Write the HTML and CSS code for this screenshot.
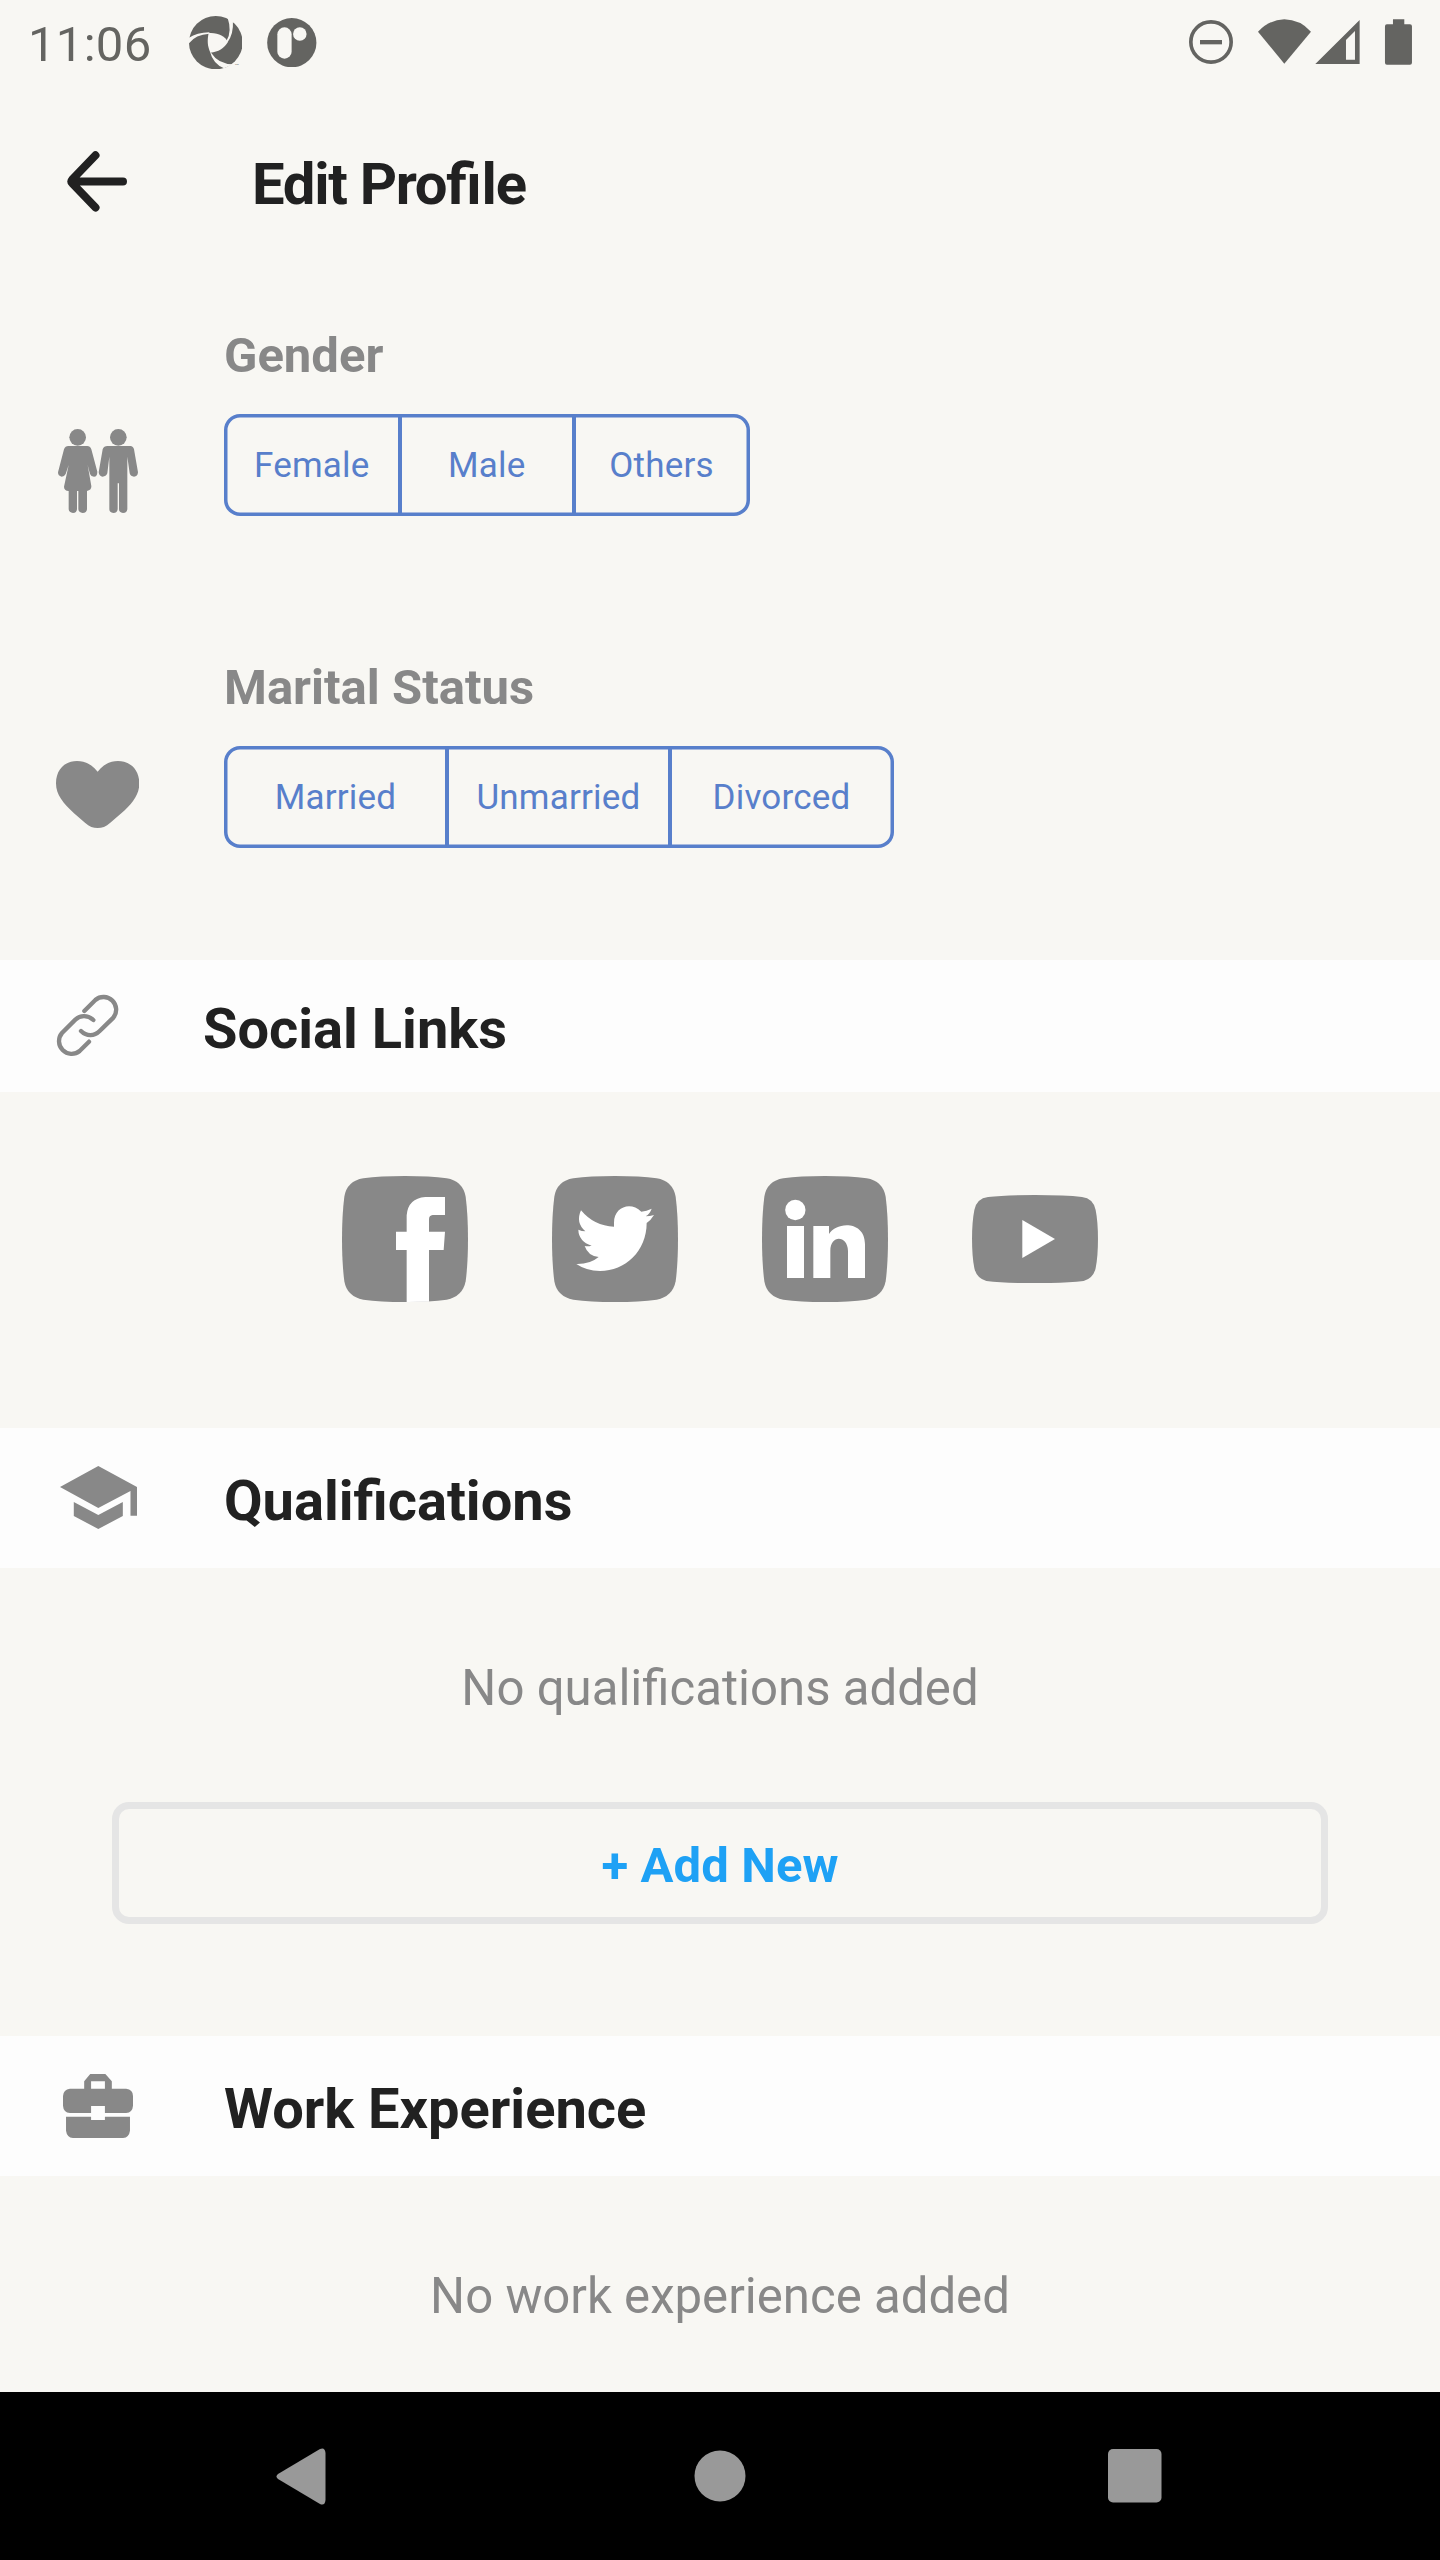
FILE: index.html
```html
<!DOCTYPE html>
<html lang="en">
<head>
<meta charset="utf-8">
<title>Edit Profile</title>
<link rel="stylesheet" href="styles.css">
</head>
<body>
<div class="screen">
  <div class="statusbar">
    <span class="clock">11:06</span>
    <svg class="icon-aperture" viewBox="528 47 150 160" preserveAspectRatio="none">
      <ellipse cx="603" cy="127" rx="75" ry="80" fill="#646461"/>
      <g fill="#f8f7f3">
        <path d="M583 98C610 96 628 107 637 125C626 144 610 155 588 157C579 138 579 118 583 98Z"/>
        <path d="M526 114Q548 97 585 96V100Q545 103 527 130Z"/>
        <path d="M636 126L633 121Q649 93 636 52L651 62Q653 100 636 126Z"/>
        <path d="M587 155L591 159Q610 192 652 192L626 204Q595 190 587 155Z"/>
      </g>
      <text x="657" y="194" font-size="7" fill="#646461">TM</text>
    </svg>
    <svg class="icon-app" viewBox="749 53 139 148" preserveAspectRatio="none">
      <ellipse cx="818.5" cy="127" rx="69" ry="74" fill="#646461"/>
      <rect x="778" y="81" width="40" height="94" rx="20" ry="21" fill="#f8f7f3"/>
      <ellipse cx="841" cy="101" rx="19" ry="20" fill="#f8f7f3"/>
    </svg>
    <svg class="icon-system" viewBox="147 56 670 140" fill="#646461">
      <circle cx="213" cy="125" r="60.5" fill="none" stroke="#646461" stroke-width="11"/>
      <path d="M180 119h66v13h-66z"/>
      <path d="M354 94Q388 58 433 57Q480 58 513 94L433 190Z"/>
      <path fill-rule="evenodd" d="M526 191L659 59V191ZM618 119V178H645V92Z"/>
      <path d="M735 78q0-6 6-6h18v-15h34v15h17q6 0 6 6v109q0 6-6 6h-69q-6 0-6-6Z"/>
    </svg>
  </div>

  <header class="header">
    <svg class="icon-back" viewBox="0 0 60 61" fill="none" stroke="#212121" stroke-width="8" stroke-linecap="round" stroke-linejoin="round">
      <path d="M28.5 4.3L5.2 28.6Q3.6 30.4 5.2 32.2L28.5 56.5M6 30.4H56"/>
    </svg>
    <h1 class="title title-page">Edit Pro<span class="ligature">fi</span>le</h1>
  </header>

  <section class="field field-gender">
    <svg class="icon-gender" viewBox="174 357 240 252" fill="#888">
      <circle cx="233" cy="382" r="25"/>
      <path d="M205 408H262Q270 408 274 418L292 485Q292 500 282 500Q273 500 270 492L263 465L274 528Q275 540 261 543V598Q260 609 248 609Q236 608 235 598V543H231V598Q230 609 219 609Q207 608 206 598V543Q192 542 192 530L206 465L197 492Q193 500 185 500Q174 498 174 487L192 418Q196 408 205 408Z"/>
      <circle cx="355" cy="382" r="25"/>
      <path d="M322 408H391Q400 409 402 418L414 487Q413 500 402 500Q392 500 389 490L382 440V598Q381 609 369 609Q357 608 357 598V520H353V598Q352 609 340 609Q328 608 328 598V440L322 490Q318 500 308 500Q297 499 296 487L308 418Q312 408 322 408Z"/>
    </svg>
    <div>
      <h2 class="label">Gender</h2>
      <div class="segments segments-gender"><span class="segment">Female</span><span class="segment">Male</span><span class="segment">Others</span></div>
    </div>
  </section>

  <section class="field field-marital">
    <svg class="icon-heart" viewBox="168 303 250 201" fill="#888">
      <path d="M293 335C275 312 255 303 231 303C195 303 168 328 168 370C168 405 190 430 222 460L255 488C268 500 280 504 293 504C306 504 318 500 331 488L364 460C397 430 418 405 418 370C418 328 390 303 354 303C330 303 311 312 293 335Z"/>
    </svg>
    <div>
      <h2 class="label">Marital Status</h2>
      <div class="segments segments-marital"><span class="segment">Married</span><span class="segment">Unmarried</span><span class="segment">Divorced</span></div>
    </div>
  </section>

  <div class="band band-social">
    <svg class="icon-link" viewBox="168 1002 189 189" fill="none" stroke="#888" stroke-width="13" stroke-linecap="round">
      <path d="M253 1053L286 1020A38 38 0 0 1 340 1073L299 1113C283 1129 260 1130 243 1113"/>
      <path d="M280 1080C262 1064 240 1066 226 1079L186 1119A38 38 0 0 0 239 1173L267 1145"/>
    </svg>
    <h2 class="title title-band">Social Links</h2>
  </div>

  <div class="socials">
    <svg class="icon-social" viewBox="0 0 378 378" fill="#fff">
      <path id="tile" fill="#888" d="M189 0Q264 0 314 7Q362 15 371 62Q378 117 378 189Q378 262 371 316Q362 362 314 371Q264 378 189 378Q114 378 64 371Q15 362 7 316Q0 262 0 189Q0 117 7 62Q15 15 64 7Q114 0 189 0Z"/>
      <path d="M194 378V222H162V167H194V118Q198 67 250 63H309V117H272Q261 118 261 130V167H309L305 222H261V377Z"/>
    </svg>
    <svg class="icon-social" viewBox="0 0 378 378" fill="#fff">
      <use href="#tile"/>
      <path d="M87 103Q126 150 186 152V140C186 94 235 75 268 107Q284 105 299 98Q294 113 281 121Q294 121 306 117Q297 132 284 141C284 225 220 285 144 285Q102 284 73 264Q114 265 140 243Q108 240 98 210Q108 212 119 209Q80 196 79 161Q89 166 100 166Q70 140 87 103Z"/>
    </svg>
    <svg class="icon-social" viewBox="0 0 378 378" fill="#fff">
      <use href="#tile"/>
      <circle cx="100" cy="102" r="30.5"/>
      <path d="M75 150H126V306H75ZM154 150H201V174C220 138 309 130 309 205V306H258V225C257 178 205 175 205 225V306H154Z"/>
    </svg>
    <svg class="icon-youtube" viewBox="0 0 378 265">
      <path fill="#888" d="M189 0Q280 0 330 6Q364 10 371 45Q378 80 378 132Q378 185 371 220Q364 250 335 258Q280 264 189 265Q98 264 43 258Q14 250 7 220Q0 185 0 132Q0 80 7 45Q14 10 48 6Q98 0 189 0Z"/>
      <path fill="#fff" d="M151 75L249 132L151 189Z"/>
    </svg>
  </div>

  <div class="band band-wide">
    <svg class="icon-school" viewBox="156 169 201 189" preserveAspectRatio="none" fill="#888">
      <path d="M256 169L357 232V318H340V244L256 295L156 232ZM192 277L256 316L320 277V319L256 358L192 319Z"/>
    </svg>
    <h2 class="title title-band">Qualifications</h2>
  </div>
  <div class="panel panel-qualifications">
    <p class="empty">No qualifications added</p>
    <div class="add">+ Add New</div>
  </div>

  <div class="band band-wide band-work">
    <svg class="icon-case" viewBox="145 162 162 192" preserveAspectRatio="none" fill="#888">
      <path fill-rule="evenodd" d="M194 206V184L208 162H243L258 184V206H291Q307 208 307 228V257Q306 277 291 279H242V258H210V279H161Q146 277 145 257V228Q146 208 161 206ZM210 184V206H242V184Z"/>
      <path d="M152 290H210V300H242V290H300V332Q298 352 284 354H168Q154 352 152 332Z"/>
    </svg>
    <h2 class="title title-band">Work Experience</h2>
  </div>
  <div class="panel">
    <p class="empty">No work experience added</p>
  </div>

  <nav class="navbar">
    <svg class="nav-back" viewBox="0 0 50 57"><path fill="#999" d="M44 1Q49-1 49.500 5V52Q49 58 44 56L2 31Q-1 28.500 2 26Z"/></svg>
    <svg class="nav-home" viewBox="0 0 52 52"><circle cx="26" cy="26" r="25.500" fill="#999"/></svg>
    <svg class="nav-recent" viewBox="0 0 54 54"><rect width="53.500" height="53.500" rx="5" fill="#999"/></svg>
  </nav>
</div>
</body>
</html>
```
FILE: styles.css
```css
* { box-sizing: border-box; }
body { margin: 0; background: #f8f7f3; font-family: Roboto, sans-serif; }
h1, h2, p { margin: 0; }
svg { display: block; flex: none; }

.screen { width: 1440px; height: 2560px; display: flex; flex-direction: column; overflow: hidden; }

.statusbar { height: 84px; flex: none; display: flex; align-items: flex-start; padding-left: 28px; }
.clock { width: 160.500px; padding-top: 16px; font-size: 49px; line-height: 58px; letter-spacing: 0.300px; color: #646461; }
.icon-aperture { width: 53.600px; height: 53.300px; margin-top: 15.700px; }
.icon-app { width: 49.600px; height: 49.300px; margin: 17.700px 0 0 25.400px; }
.icon-system { width: 223.300px; height: 46.700px; margin: 18.700px 27.700px 0 auto; }

.header { height: 202px; flex: none; display: flex; align-items: center; padding-left: 67px; }
.icon-back { width: 60px; height: 61px; margin-top: -8px; }
.title { font-size: 56px; line-height: 66px; font-weight: 700; color: #212121; white-space: nowrap; }
.title-page { margin: -3px 0 0 125px; font-size: 58px; letter-spacing: -1.300px; }
.ligature { letter-spacing: 0; }

.field { flex: none; display: flex; }
.field-gender { padding: 40px 0 0 58px; }
.field-marital { padding: 142px 0 112px 56px; }
.icon-gender { width: 80px; height: 84px; margin: 103px 86px 0 0; }
.icon-heart { width: 83.300px; height: 67px; margin: 103px 84.700px 0 0; }
.label { padding-top: 1px; margin-bottom: 29px; font-size: 49px; line-height: 58px; font-weight: 700; color: #888; }

.segments { height: 102px; display: grid; border-radius: 16px; box-shadow: inset 0 0 0 3.500px #587fcb; }
.segments-gender { grid-template-columns: 173.500px 174.500px 178px; }
.segments-marital { grid-template-columns: 221px 223px 226px; }
.segment { display: flex; align-items: center; justify-content: center; padding-top: 1px; font-size: 35px; color: #587fcb; letter-spacing: 0.200px; }
.segment:first-child { padding-left: 2px; }
.segment:last-child { padding-right: 3px; }
.segment + .segment { border-left: 4px solid #587fcb; }

.band { flex: none; display: flex; align-items: center; background: #fdfdfd; }
.title-band { padding-top: 5px; }
.band-social { height: 132px; padding-left: 56px; }
.band-wide { height: 140px; padding-left: 60px; }
.band-work { padding-left: 63px; }
.icon-link { width: 63px; height: 63px; margin: -1px 84px 0 0; }
.icon-school { width: 77px; height: 63px; margin: -1px 87px 0 0; }
.icon-case { width: 70px; height: 64px; margin-right: 91px; }

.socials { flex: none; height: 336px; display: flex; justify-content: center; gap: 84px; padding-top: 84px; }
.icon-social { width: 126px; height: 126px; }
.icon-youtube { width: 126px; height: 88.300px; margin-top: 19px; }

.panel { flex: 1; padding: 90px 112px 0; }
.panel-qualifications { flex: none; height: 468px; }
.empty { padding-top: 0.500px; font-size: 49.150px; line-height: 58px; color: #888; text-align: center; }
.add { height: 122px; margin-top: 85.500px; display: flex; align-items: center; justify-content: center; padding-top: 4px; border: 7px solid #e5e5e5; border-radius: 17px; font-size: 49px; font-weight: 700; letter-spacing: 0.100px; color: #1ea1f5; }

.navbar { flex: none; height: 168px; background: #000; display: grid; grid-template-columns: 418px 414.500px auto; align-items: center; padding-left: 275.500px; }
.nav-back { width: 50px; height: 57px; }
.nav-home { width: 52px; height: 52px; }
.nav-recent { width: 54px; height: 54px; }
```
